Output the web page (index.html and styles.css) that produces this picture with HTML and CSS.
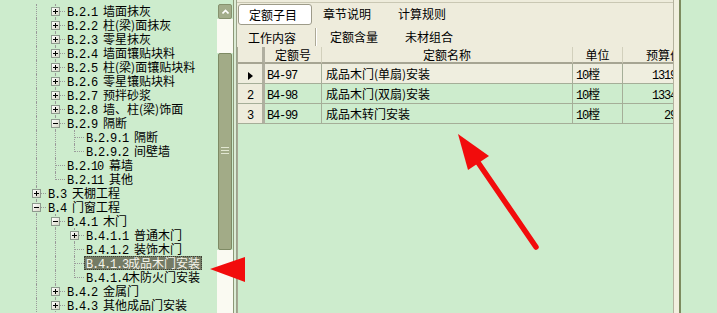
FILE: index.html
```html
<!DOCTYPE html>
<html lang="zh-CN">
<head>
    <meta charset="UTF-8">
    <meta name="viewport" content="width=device-width, initial-scale=1.0">
    <title>定额库</title>
    <link rel="stylesheet" href="styles.css">
</head>
<body>
    <div class="app">
        <!-- 章节树 -->
        <div class="tree-pane">
            <ul class="tree">
                <li class="node"><span class="g v"></span><span class="g t"><i class="box"></i></span><span class="label"><span class="c">B.2.1 </span>墙面抹灰</span></li>
                <li class="node"><span class="g v"></span><span class="g t"><i class="box"></i></span><span class="label"><span class="c">B.2.2 </span>柱(梁)面抹灰</span></li>
                <li class="node"><span class="g v"></span><span class="g t"><i class="box"></i></span><span class="label"><span class="c">B.2.3 </span>零星抹灰</span></li>
                <li class="node"><span class="g v"></span><span class="g t"><i class="box"></i></span><span class="label"><span class="c">B.2.4 </span>墙面镶贴块料</span></li>
                <li class="node"><span class="g v"></span><span class="g t"><i class="box"></i></span><span class="label"><span class="c">B.2.5 </span>柱(梁)面镶贴块料</span></li>
                <li class="node"><span class="g v"></span><span class="g t"><i class="box"></i></span><span class="label"><span class="c">B.2.6 </span>零星镶贴块料</span></li>
                <li class="node"><span class="g v"></span><span class="g t"><i class="box"></i></span><span class="label"><span class="c">B.2.7 </span>预拌砂浆</span></li>
                <li class="node"><span class="g v"></span><span class="g t"><i class="box"></i></span><span class="label"><span class="c">B.2.8 </span>墙、柱(梁)饰面</span></li>
                <li class="node"><span class="g v"></span><span class="g t"><i class="box open"></i></span><span class="label"><span class="c">B.2.9 </span>隔断</span></li>
                <li class="node"><span class="g v"></span><span class="g v"></span><span class="g t"></span><span class="label"><span class="c">B.2.9.1 </span>隔断</span></li>
                <li class="node"><span class="g v"></span><span class="g v"></span><span class="g e"></span><span class="label"><span class="c">B.2.9.2 </span>间壁墙</span></li>
                <li class="node"><span class="g v"></span><span class="g t"></span><span class="label"><span class="c">B.2.10 </span>幕墙</span></li>
                <li class="node"><span class="g v"></span><span class="g e"></span><span class="label"><span class="c">B.2.11 </span>其他</span></li>
                <li class="node"><span class="g t"><i class="box"></i></span><span class="label"><span class="c">B.3 </span>天棚工程</span></li>
                <li class="node"><span class="g t"><i class="box open"></i></span><span class="label"><span class="c">B.4 </span>门窗工程</span></li>
                <li class="node"><span class="g v"></span><span class="g t"><i class="box open"></i></span><span class="label"><span class="c">B.4.1 </span>木门</span></li>
                <li class="node"><span class="g v"></span><span class="g v"></span><span class="g t"><i class="box"></i></span><span class="label"><span class="c">B.4.1.1 </span>普通木门</span></li>
                <li class="node"><span class="g v"></span><span class="g v"></span><span class="g t"></span><span class="label"><span class="c">B.4.1.2 </span>装饰木门</span></li>
                <li class="node"><span class="g v"></span><span class="g v"></span><span class="g t"></span><span class="label sel"><span class="c">B.4.1.3</span>成品木门安装</span></li>
                <li class="node"><span class="g v"></span><span class="g v"></span><span class="g e"></span><span class="label"><span class="c">B.4.1.4</span>木防火门安装</span></li>
                <li class="node"><span class="g v"></span><span class="g t"><i class="box"></i></span><span class="label"><span class="c">B.4.2 </span>金属门</span></li>
                <li class="node"><span class="g v"></span><span class="g t"><i class="box"></i></span><span class="label"><span class="c">B.4.3 </span>其他成品门安装</span></li>
            </ul>
        </div>

        <div class="vscroll">
            <div class="sb-btn">
                <svg width="7" height="5" viewBox="0 0 7 5"><polyline points="0.5,4.5 3.5,1.5 6.5,4.5" fill="none" stroke="#fff" stroke-width="1.6"/></svg>
            </div>
            <div class="sb-track-top"></div>
            <div class="sb-thumb"><span class="grip"></span></div>
            <div class="sb-track"></div>
        </div>

        <div class="splitter"></div>

        <!-- 定额子目 -->
        <div class="main">
            <div class="tabs">
                <div class="tab-row first">
                    <span class="tab on">定额子目</span>
                    <span class="tab">章节说明</span>
                    <span class="tab">计算规则</span>
                </div>
                <div class="tab-row second">
                    <span class="tab sep">工作内容</span>
                    <span class="tab">定额含量</span>
                    <span class="tab">未材组合</span>
                </div>
            </div>

            <div class="grid">
                <table>
                    <colgroup>
                        <col style="width: 27px">
                        <col style="width: 57px">
                        <col style="width: 251px">
                        <col style="width: 50px">
                        <col style="width: 57px">
                    </colgroup>
                    <thead>
                        <tr>
                            <th class="ind"></th>
                            <th>定额号</th>
                            <th>定额名称</th>
                            <th>单位</th>
                            <th class="price-head">预算价</th>
                        </tr>
                    </thead>
                    <tbody>
                        <tr class="cur">
                            <td class="ind"><span class="caret"></span></td>
                            <td class="code"><span class="c">B4-97</span></td>
                            <td class="name">成品木门(单扇)安装</td>
                            <td class="unit"><span class="c">10</span>樘</td>
                            <td class="num"><span class="c">1319</span></td>
                        </tr>
                        <tr>
                            <td class="ind"><span class="c">2</span></td>
                            <td class="code"><span class="c">B4-98</span></td>
                            <td class="name">成品木门(双扇)安装</td>
                            <td class="unit"><span class="c">10</span>樘</td>
                            <td class="num"><span class="c">1334</span></td>
                        </tr>
                        <tr>
                            <td class="ind"><span class="c">3</span></td>
                            <td class="code"><span class="c">B4-99</span></td>
                            <td class="name">成品木转门安装</td>
                            <td class="unit"><span class="c">10</span>樘</td>
                            <td class="num"><span class="c">29</span></td>
                        </tr>
                    </tbody>
                </table>
            </div>
        </div>

        <div class="edge"></div>
        <div class="rest"></div>
    </div>

    <!-- 红色标注箭头 -->
    <svg class="marks" width="717" height="313" viewBox="0 0 717 313">
        <polygon points="210,269 245,257 245,282" fill="#f20c0c"/>
        <line x1="536" y1="247" x2="475" y2="158" stroke="#f20c0c" stroke-width="5.5" stroke-linecap="round"/>
        <polygon points="458,134 489,156 468,170" fill="#f20c0c"/>
    </svg>
</body>
</html>
```

FILE: styles.css
```css
* {
    box-sizing: border-box;
}
body {
    margin: 0;
    width: 717px;
    height: 313px;
    overflow: hidden;
    position: relative;
    background: #cdeccd;
    font-family: "Noto Sans CJK SC", sans-serif;
    font-size: 12px;
    color: #000;
}
.app {
    display: flex;
    height: 313px;
}
.c {
    font-family: "Liberation Mono", monospace;
    letter-spacing: -1.2px;
}

/* tree */
.tree-pane {
    width: 217px;
    flex: none;
    padding: 4px 0 0 27px;
    overflow: hidden;
}
.tree {
    list-style: none;
    margin: 0;
    padding: 0;
}
.node {
    display: flex;
    height: 14px;
    white-space: nowrap;
}
.g {
    position: relative;
    width: 19px;
    height: 14px;
    flex: none;
}
.g::before,
.g::after {
    content: "";
    position: absolute;
}
.v::before,
.t::before {
    left: 9px;
    top: 0;
    bottom: 0;
    border-left: 1px dotted #9a9a9a;
}
.e::before {
    left: 9px;
    top: 0;
    height: 8px;
    border-left: 1px dotted #9a9a9a;
}
.t::after,
.e::after {
    left: 10px;
    right: 0;
    top: 7px;
    border-top: 1px dotted #9a9a9a;
}
.box {
    position: absolute;
    left: 5px;
    top: 3px;
    width: 9px;
    height: 9px;
    z-index: 1;
    border: 1px solid #8e9a8e;
    background: linear-gradient(135deg, #ffffff, #d6d6c6);
}
.box::before,
.box::after {
    content: "";
    position: absolute;
    background: #000;
}
.box::before {
    left: 1px;
    top: 3px;
    width: 5px;
    height: 1px;
}
.box::after {
    left: 3px;
    top: 1px;
    width: 1px;
    height: 5px;
}
.box.open::after {
    display: none;
}
.label {
    height: 14px;
    line-height: 14px;
    padding: 0 2px;
}
.label.sel {
    background: #747b65;
    color: #f4f4ea;
    outline: 1px dotted #3c4034;
    outline-offset: -1px;
}

/* scrollbar */
.vscroll {
    width: 16px;
    flex: none;
    display: flex;
    flex-direction: column;
    padding-top: 4px;
}
.sb-btn {
    height: 15px;
    margin: 0 1px;
    display: flex;
    align-items: center;
    justify-content: center;
    background: #a3ad8b;
    border: 1px solid #86926e;
    border-radius: 2px;
}
.sb-track-top {
    height: 34px;
    background: #fafaf2;
}
.sb-thumb {
    height: 197px;
    margin: 0 1px;
    display: flex;
    align-items: center;
    justify-content: center;
    background: #a2ab87;
    border: 1px solid #7e8a64;
    border-radius: 2px;
}
.grip {
    width: 8px;
    height: 9px;
    background: repeating-linear-gradient(#e2e7d2 0 1px, transparent 1px 3px);
}
.sb-track {
    flex: 1;
    background: #fafaf2;
}
.splitter {
    width: 4px;
    flex: none;
    border-left: 1px solid #8d9878;
    border-right: 1px solid #9aa38a;
    background: #dcecd6;
}

/* main panel */
.main {
    width: 436px;
    flex: none;
    display: flex;
    flex-direction: column;
}
.tabs {
    background: #eeecdc;
    padding-top: 2px;
}
.tab-row {
    display: flex;
    padding-left: 1px;
}
.tab-row.first {
    height: 24px;
    padding-top: 1px;
    align-items: flex-start;
    border-top: 1px solid #c9c7b3;
}
.tab-row.second {
    height: 21px;
    align-items: center;
}
.tab {
    display: block;
    width: 75px;
    padding-left: 11px;
    line-height: 19px;
    flex: none;
}
.tab.on {
    width: 74px;
    height: 21px;
    padding-left: 10px;
    background: #fff;
    border: 1px solid #9d9b89;
    border-radius: 3px;
}
.second .tab {
    padding-left: 14px;
}
.second .tab.sep {
    width: 78px;
    padding-left: 10px;
    height: 18px;
    border-right: 1px solid #aca997;
    box-shadow: 1px 0 0 #fff;
}

/* grid */
.grid {
    flex: 1;
    overflow: hidden;
    border-left: 1px solid #a8a794;
}
.grid table {
    width: 442px;
    table-layout: fixed;
    border-collapse: separate;
    border-spacing: 0;
}
.grid th {
    height: 17px;
    padding: 0;
    font-weight: normal;
    white-space: nowrap;
    overflow: hidden;
    background: #eeecdc;
    border-right: 1px solid #d2d0bc;
    border-bottom: 2px solid #a6a593;
    line-height: 14px;
}
.grid th.price-head {
    text-align: left;
    padding-left: 23px;
}
.grid td {
    height: 20px;
    padding: 0;
    white-space: nowrap;
    overflow: hidden;
    border-right: 1px solid #a5ae98;
    border-bottom: 1px solid #a5ae98;
}
.grid td.ind,
.grid th.ind {
    background: #eeecdc;
    border-right: 3px solid #b0afa0;
    text-align: center;
}
.grid tr.cur td {
    background: #efeedf;
}
.grid td.code {
    padding-left: 2px;
}
.grid td.name {
    padding-left: 4px;
}
.grid td.unit {
    padding-left: 3px;
}
.grid td.num {
    text-align: right;
    padding-right: 3px;
}
.caret {
    display: inline-block;
    vertical-align: middle;
    border-left: 5px solid #000;
    border-top: 4px solid transparent;
    border-bottom: 4px solid transparent;
}

.edge {
    width: 8px;
    flex: none;
    background: #f1f0df;
    border-left: 1px solid #b4b29e;
    border-right: 2px solid #7d8b5f;
}
.rest {
    flex: 1;
}

.marks {
    position: absolute;
    left: 0;
    top: 0;
    pointer-events: none;
}
```
